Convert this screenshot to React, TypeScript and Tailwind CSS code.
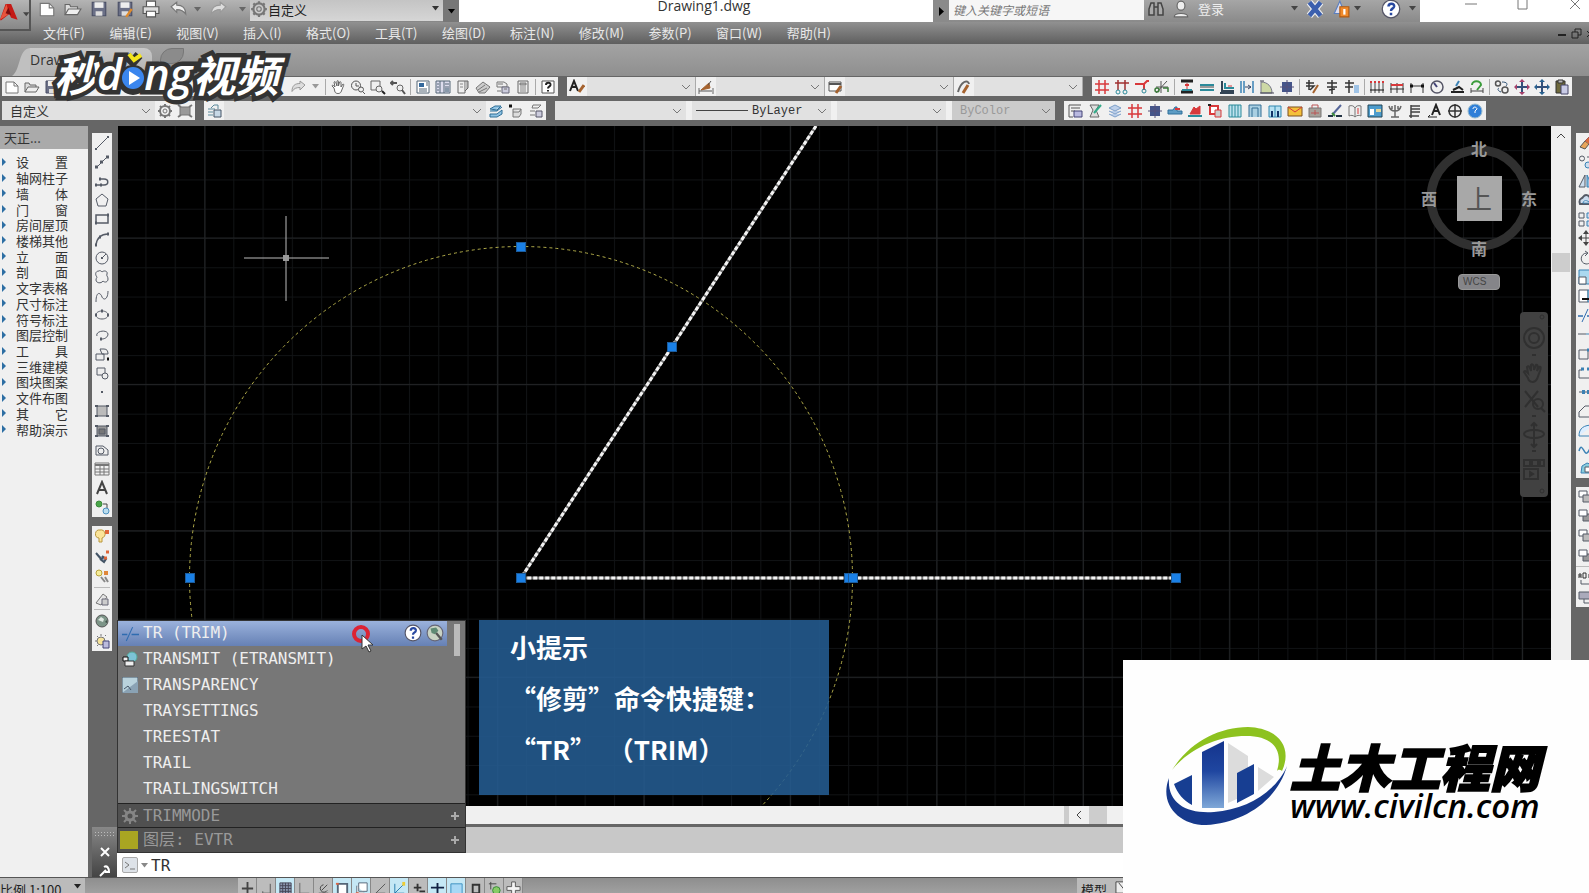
import React from 'react';

// [path, stroke, fill, stroke width]
type Shape = [string, string?, string?, number?];

const K = '#555b66';
const B = '#3b82b5';
const R = '#d8393b';
const N = 'none';
const T = '#2b8a9a';

const icons: Record<string, Shape[]> = {
  new: [['M2 3h8l4 4v7H2z', '#777', '#fff'], ['M10 3v4h4', '#777']],
  open: [['M1 13V4h4l1 2h6v2', '#666', '#ddd'], ['M1 13l3-5h11l-3 5z', '#666', '#eee']],
  save: [['M2 2h12v12H2z', '#4a4f66', '#6b7087'], ['M4 2h8v5H4z', N, '#eee'], ['M5 10h6v4H5z', N, '#ddd']],
  saveas: [['M2 2h12v12H2z', '#4a4f66', '#6b7087'], ['M4 2h8v5H4z', N, '#eee'], ['M5 10h6v4H5z', N, '#ddd'], ['M9 15l5-7', '#e08a2a', N, 2]],
  print: [['M4 6V1h8v5', '#555', '#fff'], ['M1 6h14v6H1z', '#555', '#ddd'], ['M4 10h8v5H4z', '#555', '#fff']],
  undo: [['M1 6l5-4v2.500c5 0 8 2 8 8-2-3-4-4-8-4V11z', '#777', '#eee']],
  redo: [['M15 6l-5-4v2.500c-5 0-8 2-8 8 2-3 4-4 8-4V11z', '#999', '#ddd']],
  gear: [['M8 3a5 5 0 1 1 0 10a5 5 0 1 1 0-10', '#777', N, 2], ['M8 6a2 2 0 1 1 0 4a2 2 0 1 1 0-4', '#777'], ['M8 1v2M8 13v2M1 8h2M13 8h2M3 3l1.500 1.500M11.500 11.500L13 13M3 13l1.500-1.500M11.500 4.500L13 3', '#777', N, 2]],
  hand: [['M4 9L2 7c0-1 1-1 2 0l1 1-1-5c1-1 1.500 0 2 1l1 3V2c1-1 1.500 0 1.500 1V7l1-4c1-1 1.500 0 1.500 1L11 8l2-3c1 0 1 1 0 3l-2 5c-1 2-5 2-6 0z', '#666', '#fff']],
  zoomrt: [['M6 2a4.500 4.500 0 1 1 0 9a4.500 4.500 0 1 1 0-9M6 4v3h3', '#555'], ['M11 8a2.500 2.500 0 1 1 0 5a2.500 2.500 0 1 1 0-5M13 13l2 2', '#555', '#eee', 1]],
  zoomwin: [['M1 2h9v9H1z', '#666'], ['M9 7a3 3 0 1 1 0 6a3 3 0 1 1 0-6', '#666', '#eee'], ['M12 12l3 3', '#222', N, 2]],
  zoomprev: [['M1 4h6M3 2L1 4l2 2', '#555', N, 2], ['M10 6a3 3 0 1 1 0 6a3 3 0 1 1 0-6', '#666', '#eee'], ['M12 11l3 4', '#555', N, 2]],
  props: [['M2 2h12v12H2z', '#567', '#fff'], ['M4 4h5v4H4z', N, '#35699c'], ['M4 10h8M4 12h8M11 4h2M11 6h2', '#567']],
  dcenter: [['M1 2h14v12H1z', '#567', '#dde'], ['M5 2v12M9 2v12M10 5h4M10 8h4M2 5h2M2 8h2M2 11h2', '#567'], ['M10 9h4v4h-4z', N, '#89a']],
  tool: [['M3 2h7v12H3z', '#666', '#eee'], ['M10 2h3v7l-3 3', '#666', '#bbb'], ['M5 5h3M5 8h3', '#888']],
  sheet: [['M1 9l7-6 7 5-5 6H4z', '#777', '#ccc'], ['M3 11l7-5M4 13l8-4', '#777']],
  markup: [['M2 3h7l3 2v3H2z', '#777', '#eee'], ['M7 8h7v6H7z', '#667', '#ccd'], ['M2 12h4M9 10h3M3 5h5', '#777']],
  calc: [['M3 2h10v12H3z', '#666', '#eee'], ['M5 4h6v2H5z', '#777', '#bbb'], ['M5 8h6M5 10h6M5 12h6', '#888']],
  help: [['M2 2h12v12H2z', '#555', '#fff'], ['M6 6c0-3 5-3 4.500 0C10 8 8 7.500 8 9.500M8 11v1.500', '#222', N, 2]],
  astyle: [['M1 12L5 2l4 10M3 8h4', '#222', N, 2], ['M15 6l-5 7', '#a5622e', N, 3]],
  dimstyle: [['M3 11l8-7 1 5z', '#a5622e', '#a5622e'], ['M1 12h13M13 2l-3 4', '#555', N, 1], ['M1 9v6M15 9v6', '#666']],
  tabstyle: [['M2 3h12v9H2z', '#555', '#fff'], ['M2 5h12', '#555', N, 2], ['M14 7l-5 7', '#a5622e', N, 3]],
  mlstyle: [['M2 13C5 2 12 0 13 5', '#666', N, 2], ['M12 6l-5 8', '#a5622e', N, 3]],
  axis: [['M5 1v14M11 1v14M1 5h14M1 11h14', R, N, 1.5]],
  axis2: [['M1 4h14M4 1v10M11 1v10', '#a03030', N, 1.5], ['M4 11a2 2 0 1 1 0 4a2 2 0 1 1 0-4M11 11a2 2 0 1 1 0 4a2 2 0 1 1 0-4', T]],
  axis3: [['M1 5h9l3-3h2M10 5v6', R, N, 2], ['M10 10a2 2 0 1 1 0 4a2 2 0 1 1 0-4', T]],
  axis4: [['M2 14L13 2M7 2v12M2 8h12', '#555'], ['M3 9a2 2 0 1 1 0 4a2 2 0 1 1 0-4M9 9h5v4', '#3a7a3a', N, 1.5]],
  wall1: [['M2 2h12M2 13h12', '#222', N, 3], ['M3 11h10', T, N, 2], ['M8 4v6', R], ['M6 6h4', R, N, 2]],
  wall2: [['M1 6h14M1 11h14', T, N, 2], ['M1 8h14', '#444']],
  wall3: [['M3 2v10h12M1 14h14', '#345', N, 2], ['M6 4v5h9', T, N, 2], ['M9 7h4', R]],
  wall4: [['M2 2v12M5 2v12M14 2v12', B, N, 1.5], ['M6 8h6M9 6l3 2-3 2', '#346']],
  wall5: [['M2 14V3c7 0 11 5 11 11z', '#778', '#cdd8a5'], ['M1 2h4M1 14h14', '#445']],
  column: [['M4 4h8v8H4z', '#45558a', '#45558a', 2], ['M8 1v14M1 8h14', '#55507a']],
  door1: [['M2 4h8M5 1v10M2 7h8l-4 4', '#333', N, 1.5], ['M14 6l-5 8', '#a5622e', N, 2]],
  door2: [['M3 4h10M3 8h10M8 1v14M5 11l6-1', '#333', N, 1.5]],
  door3: [['M1 4h9M1 8h8M5 1v13', '#333', N, 1.5], ['M10 6h5v8h-5z', N, '#9fc3e6']],
  dim1: [['M2 2v12M6 2v12M10 2v12M14 2v12', '#444'], ['M1 11h14', '#111'], ['M1 3h2M5 3h2M9 3h2M13 3h2', R, N, 2]],
  dim2: [['M2 4v10M8 4v10M14 4v10M1 10h14', '#333'], ['M2 6h12', R, N, 2]],
  dim3: [['M2 4v10M14 4v10M2 7h12', '#333'], ['M1 7h3M12 7h3', '#111', N, 3]],
  dim4: [['M8 2a6 6 0 1 1 0 12a6 6 0 1 1 0-12', '#556', N, 1.5], ['M8 8L5 4', '#447', N, 2]],
  dim5: [['M2 13h13M4 11l6-3 4 3', '#222', N, 2], ['M10 2L7 7', B, N, 2]],
  dim6: [['M3 6c0-5 9-5 9 0l-4 5', '#3a9c3a', N, 2], ['M2 9v5M14 9v5M2 12h12', '#444']],
  rep: [['M4 2a2.500 2.500 0 1 1 0 5a2.500 2.500 0 1 1 0-5M11 8a3 3 0 1 1 0 6a3 3 0 1 1 0-6', '#555', N, 1.5], ['M8 3c5 0 6 2 4 4M5 9c-2 1-1 3 2 4', '#357']],
  move: [['M8 2v12M2 8h12', '#33507a', N, 2], ['M8 0l3 3H5zM8 16l3-3H5zM0 8l3-3v6zM16 8l-3-3v6z', N, '#a4406a']],
  move2: [['M8 2v12M2 8h12', '#33507a', N, 2], ['M8 0l3 3H5zM8 16l3-3H5zM0 8l3-3v6zM16 8l-3-3v6z', N, '#28618f']],
  movek: [['M8 2v12M2 8h12', '#444', N, 1], ['M8 0l3 4H5zM8 16l3-4H5zM0 8l4-3v6zM16 8l-4-3v6z', N, '#444']],
  paste: [['M2 2h9v12H2z', '#333', '#6f6a3d'], ['M4 1h5v3H4z', '#333', '#bbb'], ['M7 6h7v9H7z', '#446', '#c9cbe6']],
  lay1: [['M2 2h12M2 2v12h4M4 5h9M4 8h4', '#555'], ['M7 8h8v6H7z', '#447', '#b9b9e0']],
  lay2: [['M3 2h9l-3 5 3 7H3l3-7z', '#666', '#ddd'], ['M14 2L7 10', '#3a8', N, 2]],
  lay3: [['M2 5l6-3 6 3-6 3zM2 8l6 3 6-3M2 11l6 3 6-3', '#7d9fc8', '#bdd0ea']],
  w1: [['M1 7h5l2-3h2v4h5v3H1z', '#2f6f9a', '#5d9cc4'], ['M8 6h5', R, N, 2]],
  w2: [['M3 11h10V3L9 6 7 4z', R, R, 1], ['M1 13h14', T, N, 2]],
  w3: [['M3 3h8v8H3z', R, '#fff', 2], ['M8 7h6v7H8z', R, '#ccc'], ['M1 2h3', '#222', N, 2]],
  w4: [['M2 2h12v12H2z', T, '#bfe2ef'], ['M5 2v12M8 2v12M11 2v12', T]],
  w5: [['M2 14V2h12v12M5 14V5h6v9', '#356f94', '#a9cfe2']],
  w6: [['M2 14V3h12v11zM8 3v11', '#3389b0', '#b6e1f2'], ['M5 8v6M11 8v6', '#136', N, 2]],
  mail: [['M1 4h14v9H1z', '#7a5020', '#f4c03a'], ['M1 4l7 5 7-5', R]],
  bag: [['M2 5h12v9H2z', '#777', '#a7a19a'], ['M5 5V2h6v3M4 10h8M8 7v5', '#b55']],
  brushy: [['M1 13h5M9 13h6', '#234', N, 2], ['M14 2L6 11', '#569', N, 2], ['M5 10l3 3', '#3a8a3a', N, 2]],
  book: [['M2 3c3-1 5 0 6 2v9c-2-2-4-2-6-1zM8 5c1-2 3-3 6-2v10c-2-1-4-1-6 1', '#777', '#eee'], ['M11 5v6', R]],
  tbl: [['M1 2h14v12H1z', '#245', '#4d9ccc'], ['M3 6h4v6H3z', N, '#fff'], ['M9 6h5v3H9z', N, '#e6d9a0']],
  plant: [['M2 3c1 4 3 5 6 5s5-1 6-5M5 3v3M8 2v12M11 3v3M4 14h8', '#666', N, 1.5]],
  stairs: [['M4 2v13M4 3h9M4 6h9M4 9h9M2 13h10', '#444', N, 1.5]],
  atext: [['M5 12L9 2l4 10M7 8h4', '#222', N, 2], ['M1 14h9M3 12l-2 2', '#222']],
  compass: [['M8 2a6 6 0 1 1 0 12a6 6 0 1 1 0-12M8 1v14M1 8h14', '#333', N, 1.5]],
  globe: [['M8 1a7 7 0 1 1 0 14a7 7 0 1 1 0-14', '#9bc', '#2f7fd8'], ['M6 6c0-3 4-2 4 0L8 8v2', '#fff', N, 1]],
  laystate: [['M5 5l3-3h4v4M2 6h7M2 9h5M2 12h5', '#5a8a9c'], ['M8 7h7v7H8z', '#456', '#c7d8e6']],
  layblue: [['M2 6l5-3 6 0-4 4zM2 8l7 0 5-4M2 11h7l5-4v4l-5 3H2z', '#2f6e96', '#8fc3e4']],
  layprev: [['M5 6h8l-2 3H5zM5 9v5h6l2-3V6', '#777', '#ddd'], ['M1 3h3', '#111', N, 3]],
  layset: [['M5 2h8l-3 3H4zM2 8h5M2 12h5', '#777'], ['M8 8h6v6H8z', '#556', '#ccd']],
  cogbox: [['M3 4h10v8H3z', '#777', '#999'], ['M1 2l3 2M15 2l-3 2M1 14l3-2M15 14l-3-2', '#777', N, 2]],
  line: [['M2 14L14 2', K], ['M1 14h2M13 2h2', K, N, 2]],
  xline: [['M2 14L14 2', K], ['M1 13h3M12 3h3M6 8h3', K, N, 3]],
  pline: [['M2 12h8c5 0 5-6 0-6H6', K, N, 1.5], ['M1 12h2M6 12h2M5 6h2', K, N, 3]],
  polygon: [['M8 2l6 5-2 7H4L2 7z', K]],
  rect: [['M2 4h12v8H2z', K, N, 1.5], ['M1 12h2M13 4h2', K, N, 3]],
  arc: [['M2 14C3 7 7 3 14 3', K, N, 1.5], ['M1 14h2M5 6h2M13 3h2', K, N, 3]],
  circle: [['M8 2a6 6 0 1 1 0 12a6 6 0 1 1 0-12M8 8l4-4', K], ['M7 8h2', K, N, 2]],
  cloud: [['M5 2c1-1 2 0 3 1c2-2 6-1 5 2c-1 2 1 2 1 5s-3 4-5 2c-2 3-7 2-7-1c0-2 1-2 1-3c-2-2-2-6 2-6z', K]],
  spline: [['M2 14C2 2 7 5 8 9c2 4 6 2 6-6', K]],
  ellipse: [['M8 4c8 0 8 8 0 8s-8-8 0-8', K], ['M1 8h2M13 8h2M7 4h2', K, N, 3]],
  earc: [['M3 9c-2-5 10-7 11-2c0 3-3 5-6 5', K], ['M6 12h2', K, N, 3]],
  insert: [['M6 3h4c3 0 4 2 4 5H8zM2 8h8v6H2z', K, '#eee'], ['M13 13h2', '#111', N, 3]],
  block: [['M3 3h8v7H3z', K, '#eee'], ['M11 8a3 3 0 1 1 0 6a3 3 0 1 1 0-6', K, '#eee']],
  dot: [['M7 8h2', K, N, 2]],
  hatch: [['M3 3h10v10H3z', K, '#bbb'], ['M1 3h3M12 3h3M1 13h3M12 13h3', K, N, 2]],
  grad: [['M3 3h10v10H3z', K, '#999'], ['M5 6h6v5H5z', K, '#777'], ['M1 3h3M12 3h3M1 13h3M12 13h3', K, N, 2]],
  region: [['M2 4h7l5 4v5H2z', K, '#eee'], ['M7 6a3 3 0 1 1 0 6a3 3 0 1 1 0-6', K]],
  table: [['M1 2h14v12H1zM1 8h14M1 11h14M6 5v9M10 5v9', '#777'], ['M1 4h14', '#777', N, 2]],
  text: [['M3 14L8 2l5 12M5 10h6', '#444', N, 2]],
  addsel: [['M5 2a3 3 0 1 1 0 6a3 3 0 1 1 0-6', '#3a8a3a', '#4aa64a'], ['M9 5h4v4', '#444'], ['M12 9a3 3 0 1 1 0 6a3 3 0 1 1 0-6', '#4a90c0', '#bde']],
  bulb: [['M6 2a4 4 0 0 1 2 8v4H5v-4a4 4 0 0 1 1-8', '#b8963a', '#fbe49a'], ['M11 4h4', '#e0673a', N, 4]],
  bulb2: [['M2 5l5 6 2-1M6 11l4 3 2-3-4-3', '#456', '#9ac', 2], ['M12 4h3M10 10h3', '#e0673a', N, 3]],
  bulb3: [['M5 2a3 3 0 1 1 0 6a3 3 0 1 1 0-6', '#b8a23a', '#f5ec9a'], ['M10 5h4', '#e0873a', N, 4], ['M7 9l4 5M11 9l3 5', '#888', N, 2]],
  attach: [['M2 12L9 3l4 3-6 8z', '#777', '#e4e4e4'], ['M8 8h6v6H8z', '#667', '#ccc']],
  sphere: [['M8 2a6 6 0 1 1 0 12a6 6 0 1 1 0-12', '#555', '#7d9588'], ['M4 7l3-3 3 2-1 3z', N, '#dfe8e2'], ['M11 9l2-2v3z', N, '#3c4f45']],
  sun: [['M7 4a4 4 0 1 1 0 8a4 4 0 1 1 0-8', '#777', '#f6e39a'], ['M7 1v2M1 8h2M3 3l1 1M11 3l1-1M3 13l1-1', '#777'], ['M9 8h6v7H9z', '#447', '#bbd']],
  erase: [['M2 12l5-6 4 3-4 5z', '#555', '#e8a55a'], ['M7 6l5-5 4 3-5 5', '#a55', '#d96a3c']],
  copy: [['M4 2a2.500 2.500 0 1 1 0 5a2.500 2.500 0 1 1 0-5', K], ['M10 8a3 3 0 1 1 0 6a3 3 0 1 1 0-6', B, '#cde'], ['M9 3h5', K]],
  mirror: [['M7 2v12H1z', K, '#cde'], ['M9 2v12h6z', B, '#8bd']],
  offset: [['M2 12c-2-6 2-5 3-7c3-4 7-1 7 2v5z', K, '#cde', 2], ['M5 11c0-3 5-3 7 0z', B, '#fff']],
  array: [['M1 2h5v5H1zM1 10h5v5H1z', K], ['M9 2h6v5H9zM9 10h6v5H9z', B, '#cde']],
  rotate: [['M9 3C2 3 1 13 8 14c4 0 6-3 6-6M7 1l3 2-3 3', K]],
  scale: [['M1 1h14v14H1z', B, '#aad8f0'], ['M1 8h7v7H1z', K, '#fff']],
  stretch: [['M1 2h9v12H1z', K, '#fff'], ['M10 2h5v12h-5z', B, '#9cd'], ['M4 11h7', '#111', N, 2]],
  trim: [['M0 9h5M9 9h7', '#2f6cb0', N, 1.5], ['M4 15L10 2', '#2f6cb0']],
  extend: [['M0 8h8', K], ['M8 8h5M13 2v12', B]],
  brk: [['M1 5h9v9H1zM10 5h5', K], ['M9 5h3', B, N, 3]],
  brk2: [['M1 13V5h3M1 13h14', K], ['M3 4h3M9 4h3', B, N, 3]],
  join: [['M1 8h14', K], ['M4 8h3M9 8h3', B, N, 4]],
  chamfer: [['M1 14V9l6-6h8M1 14h14', K]],
  fillet: [['M1 14C1 6 6 3 15 3M1 14h14', B, '#def']],
  blend: [['M1 10c3-10 5 4 8 2s3-8 6-8', B, N, 1.5]],
  explode: [['M4 6l5-3 6 2v8H3z', B, '#8cd'], ['M7 7h5v5H7z', K, '#fff']],
  front: [['M1 2h8v6H1z', K, '#fff'], ['M5 6h10v7H5z', K, '#bbb']],
  back: [['M5 6h10v7H5z', K, '#999'], ['M1 2h8v6H1z', K, '#fff']],
  abc: [['M1 8V4h2v4M1 6h2M5 3v5h3V3zM14 4h-3v4h4', '#333', N, 1], ['M3 10v4h12', K]],
  texthatch: [['M1 3h12v7H1z', K, '#aab'], ['M6 10v4h8', K]],
  binoc: [['M1 14V8l2-6h3v12zM10 14V2h3l2 6v6zM6 6h4', '#444', '#aaa', 1.5]],
  person: [['M8 1a3.500 4 0 1 1 0 8a3.500 4 0 1 1 0-8', '#666', '#eee'], ['M2 15c0-4 12-4 12 0z', '#666', '#eee']],
  exch: [['M3 2l10 12M13 2L3 14', '#eee', N, 6], ['M3 2l10 12M13 2L3 14', '#3b5fae', N, 4]],
  tri: [['M2 12L7 1l4 11z', '#5a7fc0', '#dde'], ['M7 6h8v9H7z', '#b05a10', '#f08a2a'], ['M11 8v5', '#fff', N, 2]],
  qmark: [['M8 1a7 7 0 1 1 0 14a7 7 0 1 1 0-14', '#556', '#fff'], ['M6 6c0-3 5-3 4.500 0C10 8 8 7.500 8 9.500M8 11v2', '#2848a0', N, 2]],
  earth: [['M8 1a7 7 0 1 1 0 14a7 7 0 1 1 0-14', '#667', '#c9d3c4'], ['M4 4l5-1 2 3-3 3-3-1z', N, '#5f8a74'], ['M9 8l5 6', '#555', N, 2]],
  transmit: [['M10 1a5 5 0 1 1 0 10a5 5 0 1 1 0-10', '#5a9', '#7cc3d6'], ['M1 6h5v4H1z', '#111', '#eee'], ['M3 10h9v5H3z', '#333', '#eee']],
  transp: [['M0 0h16v16H0z', '#456', '#b9d2dc'], ['M0 16L16 4v12z', N, '#8aa2b4'], ['M2 12l4-3 3 4', '#456', N, 1]],
  sysvar: [['M8 4a4 4 0 1 1 0 8a4 4 0 1 1 0-8', '#858585', N, 3], ['M8 0v4M8 12v4M0 8h4M12 8h4M2 2l3 3M11 11l3 3M2 14l3-3M11 5l3-3', '#858585', N, 2]],
  snap: [['M8 1v14M2 8h12', '#444', N, 2]],
  lgrid: [['M12 3v10H4M4 13v-2', '#555']],
  gridon: [['M2 2h12v12H2zM2 5h12M2 8h12M2 11h12M5 2v12M8 2v12M11 2v12', '#445', '#8b97b0']],
  ortho: [['M3 2v11h10', '#666']],
  polar: [['M3 13h10M12 4L6 10M8 4a4 4 0 1 0 4 6', '#444', N, 1]],
  osnap: [['M3 3h10v11H3z', '#567', '#fff', 2], ['M1 3h3', '#d64', N, 2]],
  osnap3: [['M5 2h9v9H5zM3 5v8h8', '#567', '#fff'], ['M2 13h3', '#d64', N, 2]],
  angle: [['M13 3L3 13h10', '#555', N, 1]],
  ducs: [['M3 3v10h10M3 13l9-9', '#27a'], ['M11 3h3', '#ec3', N, 4]],
  dyn: [['M7 3v8M3 7h8M9 11h6', '#333', N, 2]],
  lwt: [['M8 2v12M1 7h14', '#124', N, 2]],
  tpy: [['M2 3h12v12H2z', '#3a8fc0', '#a8d8f5']],
  qp: [['M5 4h7v9H5z', '#333', N, 2]],
  sc: [['M2 3h8M4 1v8', '#444', N, 1], ['M10 6a4 4 0 1 1 0 8a4 4 0 1 1 0-8', '#383', '#8c6']],
  plus: [['M6 1h4v5h5v4h-5v5H6v-5H1V6h5z', '#555', '#f4f4f4']],
  layout: [['M1 2h14v12H1z', '#444', '#eee'], ['M4 3l8 10', '#444']],
};

const Icon = ({ name, size = 16 }: { name: string; size?: number }) => (
  <svg width={size} height={size} viewBox="0 0 16 16" className="block shrink-0" aria-hidden="true">
    {icons[name].map(([d, stroke = K, fill = 'none', w = 1], i) => (
      <path key={i} d={d} stroke={stroke} fill={fill} strokeWidth={w} />
    ))}
  </svg>
);

const ToolButton = ({ name }: { name: string }) => (
  <button type="button" aria-label={name} className="flex h-full w-5 shrink-0 items-center justify-center">
    <Icon name={name} />
  </button>
);

const Chevron = () => (
  <svg width="10" height="6" viewBox="0 0 10 6" className="pointer-events-none absolute right-1 top-1/2 -translate-y-1/2" aria-hidden="true">
    <path d="M1 1l4 4 4-4" fill="none" stroke="#777" />
  </svg>
);

const Caret = ({ className = 'text-[#444]' }: { className?: string }) => (
  <svg width="7" height="5" viewBox="0 0 7 5" className={className} aria-hidden="true">
    <path d="M0 0h7L3.500 4.500z" fill="currentColor" />
  </svg>
);

const Combo = ({ label, value = '', className = '' }: { label: string; value?: string; className?: string }) => (
  <div className={`relative h-full ${className}`}>
    <select aria-label={label} className="h-full w-full appearance-none truncate bg-transparent pl-2 pr-4 text-inherit outline-none">
      <option>{value}</option>
    </select>
    <Chevron />
  </div>
);

const Bar = ({ items }: { items: string[] }) => (
  <>
    {items.map((n, i) =>
      n === '|' ? <span key={i} className="mx-[2px] h-4 w-px shrink-0 bg-[#aaa]" /> : <ToolButton key={i} name={n} />
    )}
  </>
);

const quickAccess = ['new', 'open', 'save', 'saveas', 'print'];
const menus = ['文件(F)', '编辑(E)', '视图(V)', '插入(I)', '格式(O)', '工具(T)', '绘图(D)', '标注(N)', '修改(M)', '参数(P)', '窗口(W)', '帮助(H)'];
const styleCombos = [
  ['astyle', '文字样式'],
  ['dimstyle', '标注样式'],
  ['tabstyle', '表格样式'],
  ['mlstyle', '多重引线样式'],
];
const standardTools = ['props', 'dcenter', 'tool', 'sheet', 'markup', 'calc', '|', 'help'];
const archTools = [
  'axis', 'axis2', 'axis3', 'axis4', '|', 'wall1', 'wall2', 'wall3', 'wall4', 'wall5', 'column', '|', 'door1', 'door2', 'door3', '|',
  'dim1', 'dim2', 'dim3', 'dim4', 'dim5', 'dim6', '|', 'rep', 'move', 'move2', 'paste',
];
const archTools2 = [
  'lay1', 'lay2', 'lay3', 'axis', 'column', 'w1', 'w2', 'w3', 'w4', 'w5', 'w6', 'mail', 'bag', 'brushy', 'book', 'tbl', 'plant',
  'stairs', 'atext', 'compass', 'globe',
];
const treeItems = [
  '设置', '轴网柱子', '墙体', '门窗', '房间屋顶', '楼梯其他', '立面', '剖面', '文字表格', '尺寸标注', '符号标注', '图层控制', '工具',
  '三维建模', '图块图案', '文件布图', '其它', '帮助演示',
];
const drawTools = [
  'line', 'xline', 'pline', 'polygon', 'rect', 'arc', 'circle', 'cloud', 'spline', 'ellipse', 'earc', 'insert', 'block', 'dot',
  'hatch', 'grad', 'region', 'table', 'text', 'addsel',
];
const modifyTools = [
  'erase', 'copy', 'mirror', 'offset', 'array', 'movek', 'rotate', 'scale', 'stretch', 'trim', 'extend', 'brk', 'brk2', 'join',
  'chamfer', 'fillet', 'blend', 'explode',
];
const suggestions = [
  ['transmit', 'TRANSMIT (ETRANSMIT)'],
  ['transp', 'TRANSPARENCY'],
  ['', 'TRAYSETTINGS'],
  ['', 'TREESTAT'],
  ['', 'TRAIL'],
  ['', 'TRAILINGSWITCH'],
];
const statusToggles: [string, boolean][] = [
  ['snap', false], ['lgrid', false], ['gridon', true], ['ortho', false], ['polar', false], ['osnap', true], ['osnap3', true],
  ['angle', false], ['ducs', true], ['dyn', false], ['lwt', true], ['tpy', true], ['qp', false], ['sc', false], ['plus', false],
];
const grips = [[403, 121], [554, 221], [403, 452], [731, 452], [735, 452], [1058, 452], [72, 452]];

const TitleBar = () => (
  <div className="relative flex h-[22px] items-stretch bg-white">
    <button type="button" aria-label="应用程序菜单" className="absolute left-0 top-0 z-10 flex h-[31px] w-[31px] items-center gap-1 border-b-2 border-r-2 border-[#555] bg-linear-to-b from-[#b5b5b5] to-[#888]">
      <svg width="20" height="24" viewBox="0 0 20 24" aria-hidden="true">
        <path d="M0 17L6 0h6l7 17-7-2-2-4-9 7z" fill="#c41a16" />
        <path d="M0 17L7 0l2 8-1 4z" fill="#e8553c" />
        <path d="M6 10l3-6 3 8z" fill="#7c0d0d" />
      </svg>
      <Caret />
    </button>
    <div className="flex w-[459px] shrink-0 items-center bg-linear-to-b from-[#b4b4b4] to-[#8f8f8f] pl-[34px]">
      <div className="flex h-full items-center pb-1">
        {quickAccess.map((n) => (
          <button key={n} type="button" aria-label={n} className="flex w-[26px] justify-center"><Icon name={n} size={18} /></button>
        ))}
        <button type="button" aria-label="undo" className="flex w-[30px] items-center justify-center"><Icon name="undo" size={18} /></button>
        <Caret className="mr-2 text-[#666]" />
        <button type="button" aria-label="redo" className="mr-3"><Icon name="redo" size={18} /></button>
        <Caret className="text-[#666]" />
      </div>
      <div className="ml-1 flex h-full flex-1 items-center border-b border-[#888] bg-linear-to-b from-[#c4c4c4] to-[#d6d6d6] pb-1">
        <Icon name="gear" size={18} />
        <select aria-label="工作空间" className="h-full min-w-0 flex-1 appearance-none text-[13px] text-[#222] outline-none"><option>自定义</option></select>
        <Caret className="mr-1 text-[#333]" />
      </div>
      <button type="button" aria-label="自定义快速访问工具栏" className="flex h-full w-4 items-center justify-center bg-[#777]"><Caret className="text-black" /></button>
    </div>
    <h1 className="flex flex-1 justify-center pl-4 font-['Open_Sans'] text-[14px] leading-3 text-[#333]">Drawing1.dwg</h1>
    <div className="flex w-[487px] shrink-0 items-stretch bg-linear-to-b from-[#a6a6a6] to-[#8a8a8a]">
      <button type="button" aria-label="展开" className="flex w-4 items-center justify-center bg-[#8a8a8a]">
        <svg width="5" height="9" viewBox="0 0 5 9" aria-hidden="true"><path d="M0 0l5 4.500L0 9z" /></svg>
      </button>
      <input aria-label="搜索" placeholder="键入关键字或短语" className="mb-[2px] w-[195px] bg-[#f6f6f6] pl-1 text-[12px] italic outline-none placeholder:text-[#777]" />
      <div className="flex flex-1 items-center pb-[5px] pl-1">
        <button type="button" aria-label="搜索" className="mr-2"><Icon name="binoc" /></button>
        <button type="button" className="flex items-center gap-2 text-[13px] text-[#eee]"><Icon name="person" size={18} />登录</button>
        <span className="flex-1" />
        <Caret />
        <button type="button" aria-label="Exchange" className="ml-2 mr-2"><Icon name="exch" size={18} /></button>
        <button type="button" aria-label="A360" className="mr-1"><Icon name="tri" size={18} /></button>
        <Caret />
        <button type="button" aria-label="帮助" className="ml-5 mr-2"><Icon name="qmark" size={20} /></button>
        <Caret className="mr-1 text-[#444]" />
      </div>
    </div>
    <div className="flex w-[169px] shrink-0 items-start justify-between bg-white pl-[45px] pr-2 text-[#777]">
      <button type="button" aria-label="最小化"><svg width="12" height="12"><path d="M0 4h12" stroke="currentColor" /></svg></button>
      <button type="button" aria-label="最大化"><svg width="12" height="12"><path d="M1 0v9h9V0" fill="none" stroke="currentColor" /></svg></button>
      <button type="button" aria-label="关闭"><svg width="12" height="12"><path d="M1-1l10 10M11-1L1 9" stroke="currentColor" /></svg></button>
    </div>
  </div>
);

const BrandMark = () => (
  <div className="absolute left-[54px] top-[51px] z-20 flex items-center whitespace-nowrap font-['Noto_Sans_CJK_SC'] font-bold italic leading-none text-white [-webkit-text-stroke:9px_#333] [paint-order:stroke_fill]">
    <span className="text-[43px]">秒</span>
    <span className="font-['Open_Sans'] text-[43px] font-semibold">d</span>
    <svg width="24" height="44" viewBox="0 0 24 44" className="relative z-10 -mx-px" aria-hidden="true">
      <circle cx="12" cy="29" r="15" fill="#333" />
      <path d="M6 5l6 6 6-7" fill="none" stroke="#333" strokeWidth="9" />
      <path d="M8 3l5 6 7-5" fill="none" stroke="#f4e51c" strokeWidth="4" />
      <circle cx="12" cy="27" r="11" fill="#3b86ee" />
      <path d="M8 20l11 7-11 7z" fill="#fff" />
    </svg>
    <span className="font-['Open_Sans'] text-[43px] font-semibold">ng</span>
    <span className="text-[43px]">视频</span>
  </div>
);

const Toolbars = () => (
  <div className="flex flex-col gap-[5px] overflow-hidden bg-[#666] pb-[6px] pt-px text-[13px] text-[#333]">
    <div className="flex h-[19px] items-stretch gap-[9px] pl-[2px]">
      <div className="flex w-[556px] shrink-0 items-center bg-[#f0f0f0]">
        <Bar items={['new', 'open', 'save']} />
        <span className="flex-1" />
        <ToolButton name="redo" />
        <Caret className="mx-1 text-[#999]" />
        <Bar items={['|', 'hand', 'zoomrt', 'zoomwin', 'zoomprev', '|', ...standardTools]} />
      </div>
      <div className="flex w-[516px] shrink-0 items-center bg-[#f0f0f0]">
        {styleCombos.map(([icon, label]) => (
          <div key={label} className="flex h-full flex-1 items-center border-r border-[#aaa]">
            <ToolButton name={icon} />
            <Combo label={label} className="flex-1 bg-[#e1e1e1]" />
          </div>
        ))}
      </div>
      <div className="flex shrink-0 items-center bg-[#f0f0f0]"><Bar items={archTools} /></div>
    </div>
    <div className="flex h-[19px] items-stretch gap-[9px] pl-[2px]">
      <div className="flex w-[193px] shrink-0 items-center bg-[#f0f0f0]">
        <Combo label="工作空间" value="自定义" className="flex-1 bg-[#e1e1e1]" />
        <Bar items={['gear', 'cogbox']} />
      </div>
      <div className="flex w-[342px] shrink-0 items-center bg-[#f0f0f0]">
        <ToolButton name="laystate" />
        <Combo label="图层" className="flex-1 bg-[#e1e1e1]" />
        <Bar items={['layblue', 'layprev', 'layset']} />
      </div>
      <div className="flex w-[500px] shrink-0 gap-[6px] bg-[#f0f0f0] font-['Liberation_Mono'] text-[12px]">
        <Combo label="颜色" className="w-[131px] bg-[#e1e1e1]" />
        <div className="flex w-[139px] items-center bg-[#e1e1e1] pl-1">
          <span className="h-px w-[52px] bg-[#444]" />
          <Combo label="线型" value="ByLayer" className="-ml-1 flex-1" />
        </div>
        <Combo label="线宽" className="w-[109px] bg-[#e1e1e1]" />
        <Combo label="打印样式" value="ByColor" className="flex-1 bg-[#cbcbcb] text-[#999]" />
      </div>
      <div className="flex shrink-0 items-center bg-[#f0f0f0] px-px"><Bar items={archTools2} /></div>
    </div>
  </div>
);

const NavTree = () => (
  <aside className="flex w-[88px] shrink-0 flex-col bg-[#f0f0f0] text-[13px] text-[#333]">
    <h2 className="h-[23px] bg-[#aaa] pl-1 leading-6">天正...</h2>
    <ul className="mt-[5px] grid h-[283px] auto-rows-fr">
      {treeItems.map((t) => (
        <li key={t} className="flex items-center gap-[10px] pl-[2px] leading-none">
          <svg width="4" height="8" viewBox="0 0 4 8" aria-hidden="true"><path d="M0 0l4 4-4 4z" fill="#2d6ea3" /></svg>
          <a href="#" className="flex w-[52px] justify-between">{t.length === 2 ? [...t].map((c) => <span key={c}>{c}</span>) : t}</a>
        </li>
      ))}
    </ul>
  </aside>
);

const DrawPalette = () => (
  <div className="flex w-[26px] shrink-0 flex-col bg-[#666] pt-[7px]">
    <div className="grid h-[384px] w-5 auto-rows-fr bg-[#f0f0f0]">
      {drawTools.map((n) => <ToolButton key={n} name={n} />)}
    </div>
    <div className="mt-[9px] flex h-[125px] w-5 flex-col justify-between bg-[#f0f0f0]">
      {['bulb', 'bulb2', 'bulb3', '|', 'attach', '|', 'sphere', 'sun'].map((n, i) =>
        n === '|' ? <span key={i} className="mx-[2px] h-px bg-[#bbb]" /> : <div key={i} className="h-[19px]"><ToolButton name={n} /></div>
      )}
    </div>
  </div>
);

const ModifyPalette = () => (
  <div className="w-[18px] shrink-0 overflow-hidden bg-[#666] pl-[5px] pt-[7px]">
    <div className="grid h-[345px] w-5 auto-rows-fr bg-[#f0f0f0]">
      {modifyTools.map((n) => <ToolButton key={n} name={n} />)}
    </div>
    <div className="mt-[9px] flex h-[120px] w-5 flex-col justify-between bg-[#f0f0f0]">
      {['front', 'back', 'front', 'back', '|', 'abc', 'texthatch'].map((n, i) =>
        n === '|' ? <span key={i} className="h-px bg-[#bbb]" /> : <div key={i} className="h-[19px]"><ToolButton name={n} /></div>
      )}
    </div>
  </div>
);

const ViewCube = () => (
  <div className="absolute right-[14px] top-3 flex w-[116px] flex-col items-center">
    <div className="relative grid h-[120px] w-[116px] grid-cols-3 grid-rows-3 place-items-center py-[2px] text-[16px] font-bold leading-none text-[#999]">
      <svg className="absolute inset-0" width="116" height="120" viewBox="0 0 116 120" aria-hidden="true">
        <circle cx="58" cy="60" r="48" fill="none" stroke="#303030" strokeWidth="9" />
      </svg>
      <span className="relative col-start-2 row-start-1 self-start">北</span>
      <span className="relative col-start-1 row-start-2 justify-self-start">西</span>
      <button type="button" className="relative col-start-2 row-start-2 flex h-[45px] w-[45px] items-center justify-center bg-[#a8a8a8] text-[26px] font-normal text-[#555]">上</button>
      <span className="relative col-start-3 row-start-2 justify-self-end">东</span>
      <span className="relative col-start-2 row-start-3 self-end">南</span>
    </div>
    <button type="button" className="mt-4 h-[16px] w-[42px] rounded border border-[#999] bg-[#858589] pl-1 text-left font-['Liberation_Sans'] text-[10px] leading-none text-[#444]">WCS</button>
  </div>
);

const NavBar = () => (
  <div className="absolute right-[3px] top-[186px] h-[185px] w-7 rounded bg-[#414141]">
    <svg width="28" height="185" viewBox="0 0 28 185" fill="none" stroke="#303030" strokeWidth="2" aria-hidden="true">
      <circle cx="22" cy="5" r="2" strokeWidth="1" />
      <circle cx="14" cy="26" r="10" /><circle cx="14" cy="26" r="5" />
      <path d="M8 66l-4-6c1-2 3 0 4 1l-1-6c2-2 3 1 4 4v-6c2-2 3 1 3 5l2-5c2-1 2 2 1 6l2-4c2-1 2 1 1 4l-3 8c-2 4-8 4-9-1z" />
      <path d="M5 79l13 16M18 79L5 95" /><circle cx="18" cy="92" r="5" /><path d="M21 96l4 4" />
      <ellipse cx="14" cy="122" rx="10" ry="4" /><path d="M14 111v24M11 114l3-3 3 3M11 132l3 3 3-3" />
      <path d="M4 148h6v6H4zM12 148h6v6h-6zM20 148h4v6h-4zM4 157h14v10H4z" /><path d="M10 160l3 2-3 2z" fill="#222" />
      <path d="M12 43h4M12 104h4M12 139h4" /><circle cx="22" cy="179" r="2" strokeWidth="1" />
    </svg>
  </div>
);

const DrawingCanvas = () => (
  <div className="relative min-h-0 flex-1 overflow-hidden bg-black">
    <svg className="absolute inset-0 h-full w-full" aria-label="Drawing1">
      <defs>
        <pattern id="minor" x="86" y="112" width="29.28" height="29.28" patternUnits="userSpaceOnUse">
          <path d="M0 .5h29.28M.5 0v29.280" stroke="#111315" />
        </pattern>
        <pattern id="major" x="86.500" y="111.500" width="146.400" height="146.400" patternUnits="userSpaceOnUse">
          <path d="M0 .5h146.400M.5 0v146.400" stroke="#222426" />
        </pattern>
      </defs>
      <rect width="100%" height="100%" fill="url(#minor)" />
      <rect width="100%" height="100%" fill="url(#major)" />
      <circle cx="403" cy="452" r="331.500" fill="none" stroke="#b3ad4a" strokeDasharray="3 3" />
      <path d="M698 0L403 452H1058" fill="none" stroke="#777" strokeWidth="3" />
      <path d="M698 0L403 452H1058" fill="none" stroke="#f4f4f4" strokeWidth="3" strokeDasharray="4 2" />
      {grips.map(([x, y], i) => <rect key={i} x={x - 4.5} y={y - 4.5} width="9" height="9" fill="#1a80e6" stroke="#1c5c9c" />)}
      <path d="M168 90v85M126 132h85" stroke="#bbb" />
      <rect x="165" y="129" width="6" height="6" fill="#999" />
    </svg>
    <div className="absolute left-[361px] top-[494px] h-[175px] w-[350px] bg-[#245c92]/88 pl-[31px] pt-px font-['Noto_Sans_CJK_SC'] text-[26px] font-bold leading-[51px] text-white">
      <p>小提示</p>
      <p>“修剪”命令快捷键：</p>
      <p>“TR”&nbsp;&nbsp;（TRIM）</p>
    </div>
    <ViewCube />
    <NavBar />
  </div>
);

const Workspace = () => (
  <div className="flex min-h-0 flex-1">
    <DrawPalette />
    <div className="flex min-w-0 flex-1 flex-col">
      <DrawingCanvas />
      <div className="flex h-[18px] items-stretch bg-[#f0f0f0]">
        <span className="flex-1" />
        <div className="flex w-[487px] items-center">
          <span className="h-full w-[5px] bg-[#ccc]" />
          <button type="button" aria-label="向左滚动" className="flex w-5 justify-center">
            <svg width="6" height="8" viewBox="0 0 6 8"><path d="M5 0L1 4l4 4" fill="none" stroke="#444" /></svg>
          </button>
          <span className="h-full w-[18px] bg-[#cdcdcd]" />
        </div>
      </div>
    </div>
    <div className="flex w-5 shrink-0 flex-col items-center bg-[#f0f0f0]">
      <button type="button" aria-label="向上滚动" className="flex h-5 items-center">
        <svg width="10" height="6" viewBox="0 0 10 6"><path d="M1 5l4-4 4 4" fill="none" stroke="#444" /></svg>
      </button>
      <span className="mt-[107px] h-[19px] w-[18px] bg-[#cdcdcd]" />
    </div>
    <ModifyPalette />
  </div>
);

const CommandPanel = () => (
  <div className="relative flex h-[53px] shrink-0 border-t-3 border-[#666] bg-[#c8c8c8]">
    <div className="flex w-[25px] flex-col items-center gap-2 bg-linear-to-b from-[#888] to-[#444] pt-1 text-white">
      <svg width="20" height="8" aria-hidden="true"><path d="M0 1.500h20M0 4.500h20" stroke="#bbb" strokeDasharray="1 2" /></svg>
      <button type="button" aria-label="关闭"><svg width="10" height="10" className="block"><path d="M1 1l8 8M9 1L1 9" stroke="#fff" strokeWidth="2" /></svg></button>
      <button type="button" aria-label="自定义"><svg width="12" height="12" className="block"><path d="M1 11l6-6M5 2c3-2 5 1 5 5H6" fill="none" stroke="#fff" strokeWidth="2" /></svg></button>
    </div>
    <div className="flex flex-1 flex-col justify-end">
      <div className="flex h-6 items-center bg-white pl-[5px] font-['DejaVu_Sans_Mono'] text-[16px] text-[#333]">
        <span className="flex h-4 w-4 items-center justify-center rounded-xs border border-[#aaa] bg-[#dde2e8]">
          <svg width="12" height="10" aria-hidden="true"><path d="M1 2l4 3-4 3M6 9h5" fill="none" stroke="#777" /></svg>
        </span>
        <Caret className="mx-[3px] text-[#888]" />
        <input aria-label="命令" defaultValue="TR" className="h-6 min-w-0 flex-1 pt-px outline-none" />
      </div>
    </div>
    <div className="absolute bottom-6 left-[25px] w-[349px] border border-[#333] bg-[#777] font-['DejaVu_Sans_Mono','Noto_Sans_CJK_SC',monospace] text-[16px] text-[#eee]">
      <div className="relative mr-[18px] flex h-[25px] items-center bg-linear-to-b from-[#9bb2dc] to-[#6681b5] pb-px pl-1 pr-[3px]">
        <Icon name="trim" size={17} />
        <span className="ml-1 flex-1">TR (TRIM)</span>
        <button type="button" aria-label="帮助" className="mr-1"><Icon name="qmark" size={18} /></button>
        <button type="button" aria-label="在 Internet 上搜索"><Icon name="earth" size={18} /></button>
        <svg width="24" height="30" viewBox="0 0 24 30" className="absolute right-[71px] top-1" aria-hidden="true">
          <circle cx="9" cy="9" r="7" fill="none" stroke="#dc2334" strokeWidth="4" />
          <path d="M10 10v14l4-3 3 6 2-1-3-6h5z" fill="#fff" stroke="#333" />
        </svg>
      </div>
      <ul className="pb-px">
        {suggestions.map(([icon, text]) => (
          <li key={text} className="flex h-[26px] items-center pl-1">
            <span className="w-[21px]">{icon && <Icon name={icon} />}</span>
            {text}
          </li>
        ))}
      </ul>
      <span className="absolute right-[5px] top-[3px] h-8 w-[6px] bg-[#bbb]" />
      <div className="flex h-6 items-center justify-between border-t border-[#222] bg-[#505050] pl-1 pr-[6px] text-[#999]">
        <span className="flex items-center gap-[5px]"><Icon name="sysvar" />TRIMMODE</span>
        <svg width="8" height="8"><path d="M4 0v8M0 4h8" stroke="#aaa" strokeWidth="2" /></svg>
      </div>
      <div className="flex h-[25px] items-center justify-between border-t border-[#222] bg-[#505050] pl-[2px] pr-[6px] text-[#999]">
        <span className="flex items-center gap-[5px]"><i className="h-[18px] w-[18px] bg-[#a9a522]" />图层: EVTR</span>
        <svg width="8" height="8"><path d="M4 0v8M0 4h8" stroke="#aaa" strokeWidth="2" /></svg>
      </div>
    </div>
  </div>
);

const StatusBar = () => (
  <footer className="flex h-4 shrink-0 items-start overflow-hidden border-t border-[#555] bg-linear-to-b from-[#8e8e8e] to-[#a0a0a0] text-[13px] leading-5 text-[#222]">
    <div className="flex w-[85px] items-start bg-[#bbb] pt-[2px]">
      <span className="flex-1 whitespace-nowrap">比例 1:100</span>
      <Caret className="mr-1 mt-1 text-[#222]" />
    </div>
    <span className="w-[153px]" />
    <div className="flex">
      {statusToggles.map(([n, on]) => (
        <button key={n} type="button" aria-label={n} aria-pressed={on} className={`flex h-5 w-[19px] items-center justify-center border-r border-[#888] ${on ? 'bg-[#c5e8f5]' : 'bg-[#bcbcbc]'}`}>
          <Icon name={n} size={15} />
        </button>
      ))}
    </div>
    <span className="flex-1" />
    <div className="flex w-[512px] gap-1 bg-[#bbb] pl-1 pt-[2px]">
      <span className="mr-1">模型</span>
      <Icon name="layout" size={15} />
    </div>
  </footer>
);

const SiteBadge = () => (
  <div className="absolute bottom-0 right-0 z-30 flex h-[233px] w-[466px] items-center bg-[#fefefe] pl-[41px]">
    <svg width="126" height="102" viewBox="0 0 126 102" className="shrink-0" aria-hidden="true">
      <defs>
        <linearGradient id="tower" x1="0" y1="0" x2="0" y2="1">
          <stop offset="0" stopColor="#14348c" />
          <stop offset=".45" stopColor="#1f46a0" />
          <stop offset="1" stopColor="#7fa8d8" />
        </linearGradient>
      </defs>
      <path d="M64 17l20 13v38l-20 9zM94 41l16 10-16 14z" fill="#dcdcdc" />
      <path d="M38 26l22-11v67H38z" fill="url(#tower)" />
      <path d="M10 58l18-9v30C20 75 13 67 10 58zM73 47l17-9v30l-17 9z" fill="#173e92" />
      <path d="M8 44C25 17 54 1 84 1c30 1 45 20 34 44-3-2-4-1-5 0C120 22 107 10 82 10 54 10 26 22 8 44z" fill="#8dc21f" />
      <path d="M5 52C-5 77 14 99 42 99c37-2 71-24 81-59-10 24-39 44-73 46C22 88 3 77 5 52z" fill="#16398c" />
    </svg>
    <div className="whitespace-nowrap pt-1 text-black">
      <p className="font-['Noto_Sans_CJK_SC'] text-[50px] font-black italic leading-[54px] [-webkit-text-stroke:2px_#000]">土木工程网</p>
      <p className="font-['Open_Sans'] text-[33px] font-semibold italic leading-7">www.civilcn.com</p>
    </div>
  </div>
);

export default function App() {
  return (
    <div className="relative flex h-screen flex-col overflow-hidden bg-[#666] font-['Noto_Sans_CJK_SC',sans-serif]">
      <header className="relative shrink-0">
        <TitleBar />
        <nav className="flex h-[22px] items-center justify-between bg-linear-to-b from-[#919191] to-[#5f5f5f] pl-[43px] text-[13px] text-[#e8e8e8]">
          <div className="flex w-[788px] justify-between">
            {menus.map((m) => <a key={m} href="#" className="whitespace-nowrap">{m}</a>)}
          </div>
          <svg width="32" height="12" fill="none" stroke="#222" aria-hidden="true"><path d="M1 8h8" strokeWidth="2" /><path d="M15 5h6v6h-6zM18 5V2h6v6h-3M30 4l6 6M36 4l-6 6" /></svg>
        </nav>
        <div className="flex h-8 items-end bg-linear-to-b from-[#a3a3a3] to-[#8f8f8f] pl-3">
          <svg width="18" height="28" aria-hidden="true"><path d="M0 28C9 22 6 1 18 0v28z" fill="#c0c0c0" /></svg>
          <a href="#" className="h-7 w-[122px] rounded-tr-lg bg-linear-to-b from-[#c8c8c8] to-[#b0b0b0] font-['Open_Sans'] text-[14px] leading-6 text-[#333]">Drawing1</a>
          <button type="button" aria-label="新图形" className="mb-3 ml-2 h-4 w-6 rounded-br-xl rounded-tl-xl border border-[#777] bg-[#8b8b8b]" />
        </div>
        <BrandMark />
        <Toolbars />
      </header>
      <main className="flex min-h-0 flex-1">
        <NavTree />
        <div className="flex min-w-0 flex-1 flex-col pl-1">
          <Workspace />
          <CommandPanel />
        </div>
      </main>
      <StatusBar />
      <SiteBadge />
    </div>
  );
}
